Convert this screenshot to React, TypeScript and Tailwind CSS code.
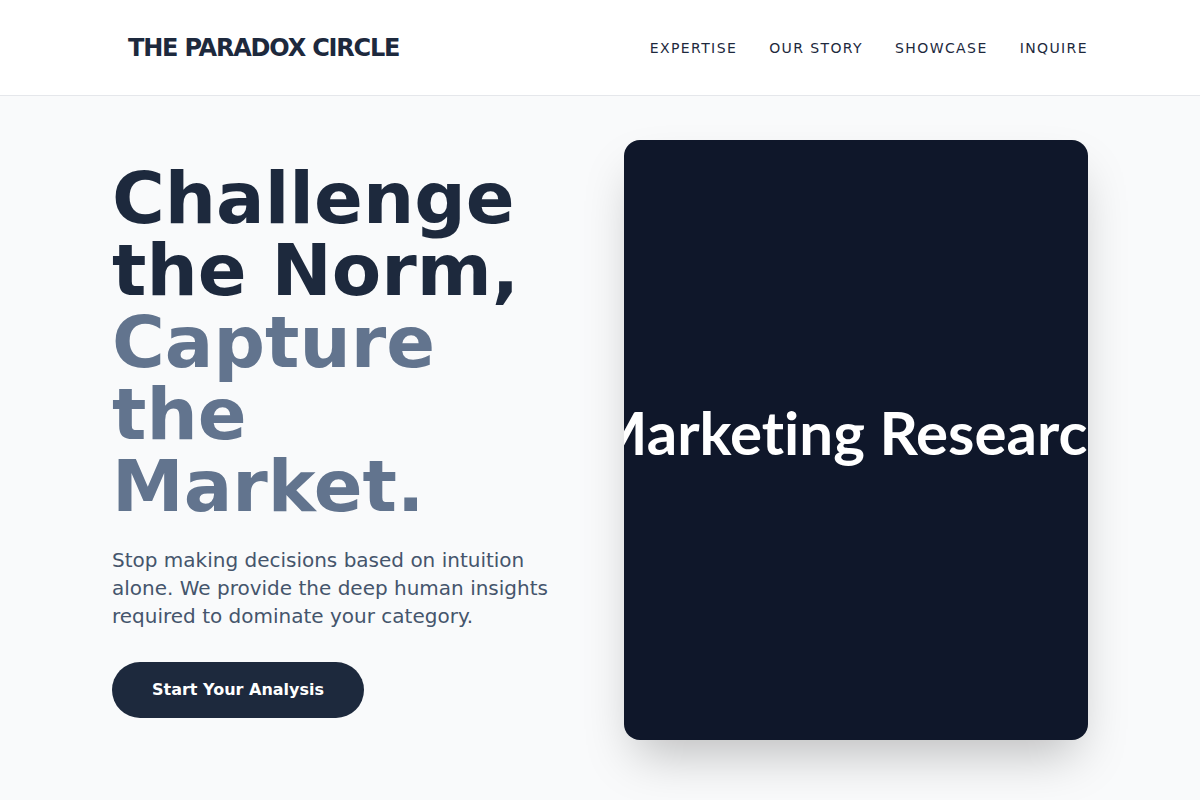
export default function App() {
  return (
    <div className="min-h-screen bg-[#f9fafb] font-['DejaVu_Sans',sans-serif]">
      <header className="h-24 bg-white border-b border-gray-200">
        <div className="max-w-5xl mx-auto h-full pl-10 pr-6 flex items-center justify-between">
          <div className="text-2xl font-bold tracking-tighter text-slate-800">THE PARADOX CIRCLE</div>
          <nav className="flex items-center gap-8 text-sm tracking-widest text-slate-800">
            <a>EXPERTISE</a>
            <a>OUR STORY</a>
            <a>SHOWCASE</a>
            <a>INQUIRE</a>
          </nav>
        </div>
      </header>
      <main className="max-w-5xl mx-auto px-6 pt-[44px] pb-16">
        <div className="grid grid-cols-2 gap-12 items-center">
          <div>
            <h1 className="text-7xl font-bold text-slate-800 mb-6">
              Challenge the Norm, <span className="text-slate-500">Capture the Market.</span>
            </h1>
            <p className="text-xl text-slate-600 max-w-md">
              Stop making decisions based on intuition alone. We provide the deep human insights required to dominate your category.
            </p>
            <button className="mt-8 px-10 py-4 rounded-full bg-slate-800 text-white font-bold text-base">
              Start Your Analysis
            </button>
          </div>
          <div className="h-[600px] rounded-2xl bg-[#0f172a] shadow-2xl overflow-hidden flex items-center justify-center pb-4">
            <span className="whitespace-nowrap text-6xl font-bold text-white font-['Lato',sans-serif] [font-variant-ligatures:none]">Marketing Research</span>
          </div>
        </div>
      </main>
    </div>
  );
}
